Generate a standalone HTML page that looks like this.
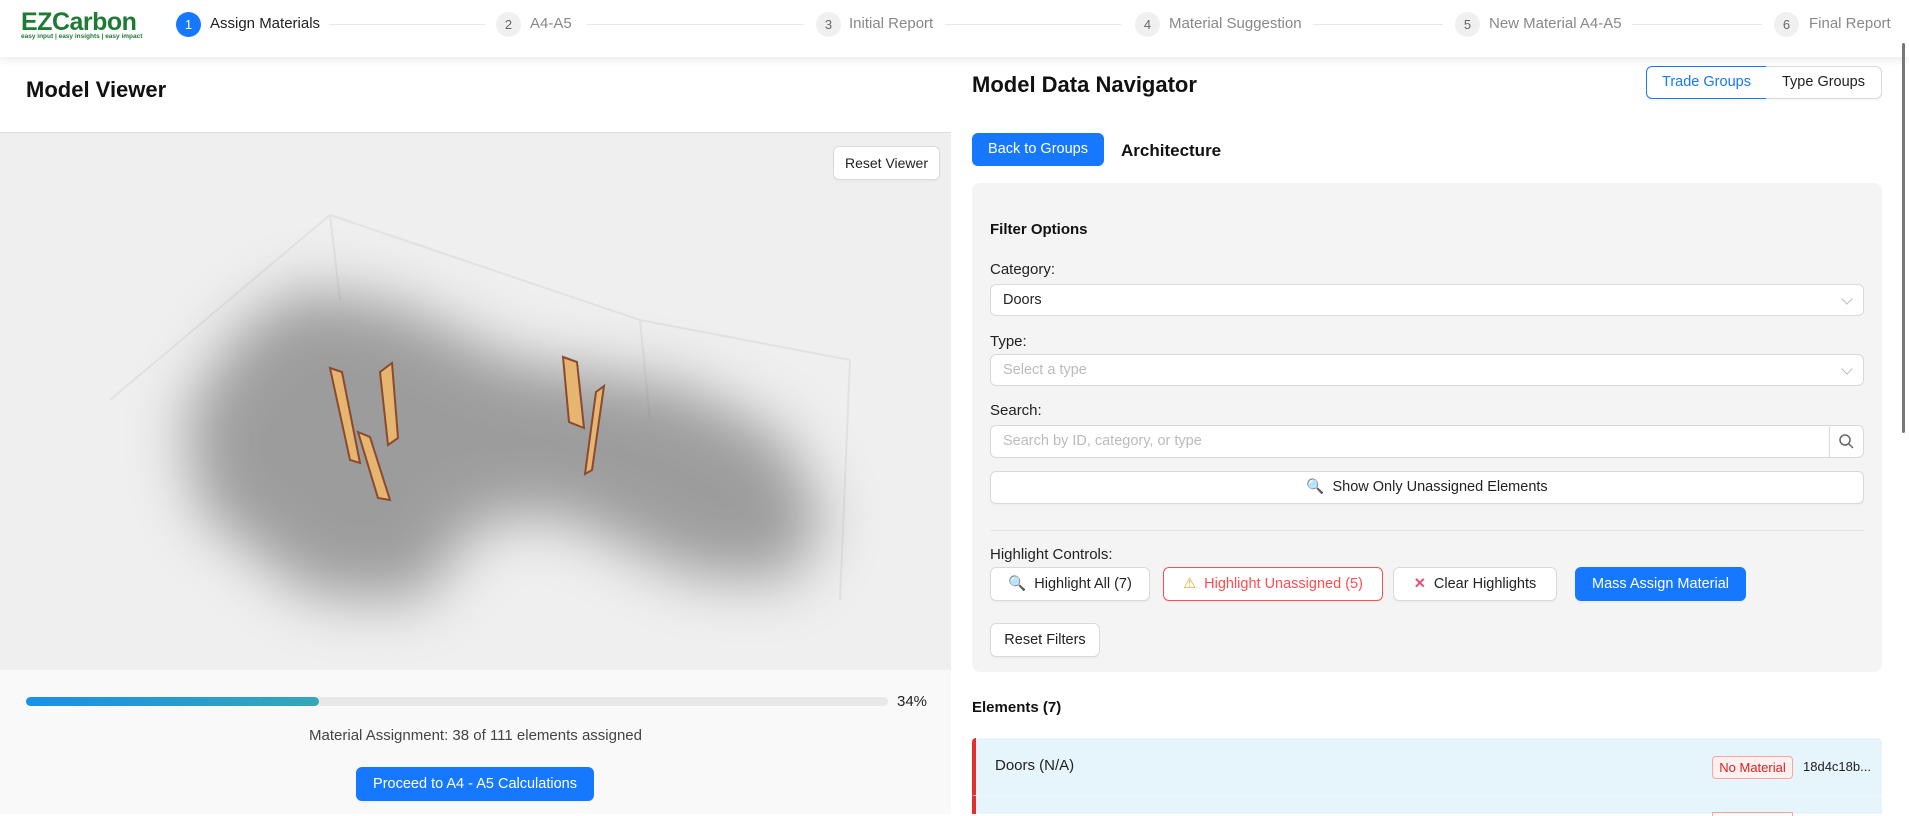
<!DOCTYPE html>
<html><head><meta charset="utf-8"><style>
*{box-sizing:border-box;margin:0;padding:0}
body{width:1909px;height:814px;overflow:hidden;background:#fff;font-family:"Liberation Sans",sans-serif;color:#222;position:relative}
.abs{position:absolute}
.hdr{left:0;top:0;width:1909px;height:57px;background:#fff;box-shadow:0 3px 8px rgba(0,0,0,.08);z-index:5}
.circ{position:absolute;width:25px;height:25px;border-radius:50%;background:#f0f0f0;color:#666;font-size:13px;line-height:25px;text-align:center;top:12px}
.circ.on{background:#1677ff;color:#fff}
.st{position:absolute;top:15px;font-size:15px;color:#888;white-space:nowrap}
.ln{position:absolute;top:24px;height:1px;background:#e8e8e8}
.btn{position:absolute;border:1px solid #d9d9d9;background:#fff;border-radius:6px;font-size:14.5px;text-align:center;color:#222;box-shadow:0 2px 0 rgba(0,0,0,.02);white-space:nowrap}
.blue{background:#1677ff;border-color:#1677ff;color:#fff}
.lbl{position:absolute;left:990px;font-size:15px;color:#222}
.sel{position:absolute;left:990px;width:874px;background:#fff;border:1px solid #d9d9d9;border-radius:6px;font-size:14.5px;padding-left:12px}
.chev{position:absolute;right:12px;top:10px;width:8px;height:8px;border-right:1.5px solid #bbb;border-bottom:1.5px solid #bbb;transform:rotate(45deg)}
</style></head><body>
<div class="abs hdr">
  <div class="abs" style="left:21px;top:8px;font-size:25px;font-weight:bold;color:#1e7a35;letter-spacing:-0.5px">EZCarbon</div>
  <div class="abs" style="left:21px;top:33px;font-size:6.5px;font-weight:bold;color:#1e7a35;white-space:nowrap">easy input | easy insights | easy impact</div>
  <div class="circ on" style="left:176px">1</div><div class="st" style="left:210px;color:#222">Assign Materials</div>
  <div class="ln" style="left:329px;width:156px"></div>
  <div class="circ" style="left:496px">2</div><div class="st" style="left:530px">A4-A5</div>
  <div class="ln" style="left:587px;width:217px"></div>
  <div class="circ" style="left:816px">3</div><div class="st" style="left:849px">Initial Report</div>
  <div class="ln" style="left:945px;width:176px"></div>
  <div class="circ" style="left:1135px">4</div><div class="st" style="left:1169px">Material Suggestion</div>
  <div class="ln" style="left:1313px;width:130px"></div>
  <div class="circ" style="left:1455px">5</div><div class="st" style="left:1489px">New Material A4-A5</div>
  <div class="ln" style="left:1632px;width:130px"></div>
  <div class="circ" style="left:1774px">6</div><div class="st" style="left:1809px">Final Report</div>
</div>
<div class="abs" style="left:1902px;top:43px;width:3px;height:390px;background:#777;border-radius:2px;z-index:6"></div>

<!-- left -->
<div class="abs" style="left:26px;top:77px;font-size:22px;font-weight:bold;color:#111">Model Viewer</div>
<div class="abs" style="left:0;top:132px;width:951px;height:1px;background:#ddd"></div>
<div class="abs" style="left:0;top:133px;width:951px;height:537px;background:#efefef;overflow:hidden">
<svg width="951" height="537" viewBox="0 133 951 537" xmlns="http://www.w3.org/2000/svg">
<defs><filter id="b" x="-30%" y="-30%" width="160%" height="160%"><feGaussianBlur stdDeviation="30"/></filter></defs>
<g fill="none" stroke="#e2e2e2" stroke-width="2">
<polyline points="110,400 330,215 640,320 850,360 840,600"/>
<polyline points="330,215 340,300"/>
<polyline points="640,320 650,420"/>
</g>
<polygon points="300,290 400,305 510,360 680,385 780,435 825,520 790,580 690,575 560,515 480,520 420,600 310,595 200,510 185,415 240,330" fill="#7a7a7a" opacity=".7" filter="url(#b)"/>
<g stroke="#8b4a2f" stroke-width="2" fill="#e6b570">
<polygon points="330,368 342,372 360,463 350,460"/>
<polygon points="380,372 392,363 398,438 388,445"/>
<polygon points="358,432 370,437 390,500 378,498"/>
<polygon points="563,357 577,362 584,428 569,422"/>
<polygon points="596,392 604,386 592,470 585,474"/>
</g>
</svg>
</div>
<div class="btn" style="left:833px;top:146px;width:107px;height:34px;line-height:32px;font-size:14px">Reset Viewer</div>
<div class="abs" style="left:0;top:670px;width:951px;height:144px;background:#f9f9f9"></div>
<div class="abs" style="left:26px;top:697px;width:862px;height:9px;background:#e8e8e8;border-radius:5px"></div>
<div class="abs" style="left:26px;top:697px;width:293px;height:9px;background:linear-gradient(90deg,#1890e8,#36a6b8);border-radius:5px"></div>
<div class="abs" style="left:897px;top:693px;font-size:15px">34%</div>
<div class="abs" style="left:0;width:951px;top:727px;text-align:center;font-size:15px;color:#444">Material Assignment: 38 of 111 elements assigned</div>
<div class="btn blue" style="left:356px;top:767px;width:238px;height:34px;line-height:32px">Proceed to A4 - A5 Calculations</div>

<!-- right -->
<div class="abs" style="left:972px;top:72px;font-size:22px;font-weight:bold;color:#111">Model Data Navigator</div>
<div class="btn" style="left:1646px;top:66px;width:121px;height:33px;line-height:31px;border-color:#1677ff;color:#1677ff;border-radius:6px 0 0 6px">Trade Groups</div>
<div class="btn" style="left:1766px;top:66px;width:116px;height:33px;line-height:31px;border-radius:0 6px 6px 0;border-left:none">Type Groups</div>
<div class="btn blue" style="left:972px;top:133px;width:132px;height:33px;line-height:31px">Back to Groups</div>
<div class="abs" style="left:1121px;top:141px;font-size:17px;font-weight:bold;color:#111">Architecture</div>
<div class="abs" style="left:972px;top:183px;width:910px;height:489px;background:#f4f4f4;border-radius:8px"></div>
<div class="abs" style="left:990px;top:221px;font-size:15px;font-weight:bold;color:#111">Filter Options</div>
<div class="lbl" style="top:261px">Category:</div>
<div class="sel" style="top:284px;height:32px;line-height:30px">Doors<div class="chev"></div></div>
<div class="lbl" style="top:333px">Type:</div>
<div class="sel" style="top:354px;height:32px;line-height:30px;color:#bbb">Select a type<div class="chev"></div></div>
<div class="lbl" style="top:402px">Search:</div>
<div class="sel" style="top:425px;height:33px;line-height:31px;color:#bbb">Search by ID, category, or type
 <div class="abs" style="right:0;top:-1px;width:34px;height:33px;border-left:1px solid #d9d9d9">
 <svg width="34" height="33"><circle cx="15" cy="15" r="5" fill="none" stroke="#666" stroke-width="1.5"/><line x1="19" y1="19" x2="23" y2="23" stroke="#666" stroke-width="1.5"/></svg></div></div>
<div class="btn" style="left:990px;top:471px;width:874px;height:33px;line-height:31px"><span style="color:#4a90d9">&#128269;</span>&nbsp; Show Only Unassigned Elements</div>
<div class="abs" style="left:990px;top:530px;width:874px;height:1px;background:#e6e6e6"></div>
<div class="lbl" style="top:546px">Highlight Controls:</div>
<div class="btn" style="left:990px;top:567px;width:160px;height:34px;line-height:32px"><span style="color:#4a90d9">&#128269;</span>&nbsp; Highlight All (7)</div>
<div class="btn" style="left:1163px;top:567px;width:220px;height:34px;line-height:32px;border-color:#ff4d4f;color:#ff4d4f"><span style="color:#f0a020">&#9888;</span>&nbsp; Highlight Unassigned (5)</div>
<div class="btn" style="left:1393px;top:567px;width:164px;height:34px;line-height:32px"><span style="color:#e8507a;font-weight:bold">&#10005;</span>&nbsp; Clear Highlights</div>
<div class="btn blue" style="left:1575px;top:567px;width:171px;height:34px;line-height:32px">Mass Assign Material</div>
<div class="btn" style="left:990px;top:623px;width:110px;height:34px;line-height:32px">Reset Filters</div>
<div class="abs" style="left:972px;top:699px;font-size:15px;font-weight:bold;color:#111">Elements (7)</div>
<div class="abs" style="left:972px;top:738px;width:910px;height:57px;background:#e6f4fc;border-left:4px solid #e03030;border-radius:4px 4px 0 0"></div>
<div class="abs" style="left:995px;top:757px;font-size:15px">Doors (N/A)</div>
<div class="abs" style="left:1712px;top:756px;width:81px;height:23px;border:1px solid #ffa39e;background:#fff1f0;color:#e02020;font-size:13px;text-align:center;line-height:21px;border-radius:4px">No Material</div>
<div class="abs" style="left:1803px;top:759px;font-size:13px">18d4c18b...</div>
<div class="abs" style="left:972px;top:795px;width:910px;height:19px;background:#e6f4fc;border-left:4px solid #e03030;border-top:1px solid #f5f5f5"></div>
<div class="abs" style="left:1712px;top:812px;width:81px;height:4px;border:1px solid #ffa39e;border-bottom:none"></div>
</body></html>
